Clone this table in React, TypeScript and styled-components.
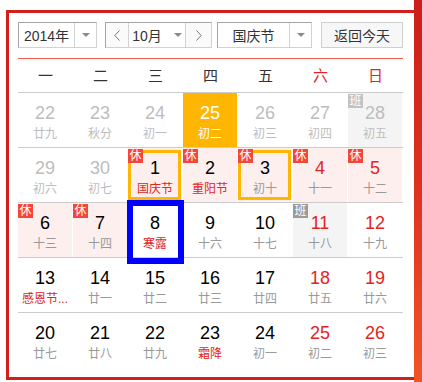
import React from 'react'
import styled, { createGlobalStyle, css } from 'styled-components'

const GlobalStyle = createGlobalStyle`
  html, body {
    margin: 0;
    padding: 0;
    background: #fff;
  }
  body {
    font-family: "Liberation Sans", "Noto Sans CJK SC", sans-serif;
    color: #333;
  }
`

const Page = styled.div`
  display: flex;
  width: 422px;
  height: 382px;
  overflow: hidden;
`

const Frame = styled.div`
  margin: 10px 0 0 6px;
  width: 408px;
  height: 370px;
  box-sizing: border-box;
  border: 3px solid #d21f1b;
  border-right: none;
  padding: 9px 11px 10px 9px;
  background: #fff;
`

const Strip = styled.div`
  width: 8px;
  height: 382px;
  background: linear-gradient(to bottom, #cc1d1a 0%, #de3220 50%, #f25426 100%);
`

const Toolbar = styled.div`
  display: flex;
  height: 26px;
`

const Group = styled.div<{ $w: number; $ml?: number }>`
  display: flex;
  width: ${p => p.$w}px;
  margin-left: ${p => p.$ml ?? 0}px;
  box-sizing: border-box;
  border: 1px solid #d2d2d2;
  border-top-color: #a5a5a5;
  border-left-color: #a5a5a5;
  background: #fff;
`

const SelectText = styled.div<{ $w: number }>`
  width: ${p => p.$w}px;
  display: flex;
  align-items: center;
  justify-content: center;
  font-size: 14px;
  color: #333;
`

const ArrowPart = styled.div`
  flex: 1;
  display: flex;
  align-items: center;
  justify-content: center;
  border-left: 1px solid #d2d2d2;
`

const Caret = styled.span<{ $ml?: number }>`
  display: inline-block;
  width: 0;
  height: 0;
  margin-left: ${p => p.$ml ?? 0}px;
  border-top: 4px solid #8a8a8a;
  border-left: 4px solid transparent;
  border-right: 4px solid transparent;
`

const NavButton = styled.div<{ $w: number; $side: 'left' | 'right' }>`
  width: ${p => p.$w}px;
  display: flex;
  align-items: center;
  justify-content: center;
  background: #fafafa;
  ${p => (p.$side === 'left' ? 'border-right' : 'border-left')}: 1px solid #d2d2d2;
`

const MonthText = styled.div`
  flex: 1;
  display: flex;
  align-items: center;
  justify-content: center;
  font-size: 14px;
  color: #333;
`

const TodayButton = styled.div`
  margin-left: 9px;
  width: 82px;
  box-sizing: border-box;
  border: 1px solid #cfcfcf;
  background: #f7f7f7;
  display: flex;
  align-items: center;
  justify-content: center;
  font-size: 14px;
  color: #333;
`

const RedRule = styled.div`
  margin-top: 10px;
  height: 1px;
  background: #f5594b;
`

const WeekHeader = styled.div`
  display: grid;
  grid-template-columns: repeat(7, 55px);
  height: 33px;
  border-bottom: 1px solid #cccccc;
`

const WeekDay = styled.div<{ $red?: boolean }>`
  text-align: center;
  line-height: 33px;
  font-size: 15px;
  color: ${p => (p.$red ? '#e3241f' : '#333')};
`

const Row = styled.div<{ $last?: boolean }>`
  display: grid;
  grid-template-columns: repeat(7, 54px);
  column-gap: 1px;
  width: 385px;
  height: 54px;
  border-bottom: ${p => (p.$last ? 'none' : '1px solid #cccccc')};
`

type Tone = 'other' | 'normal' | 'weekend' | 'today'
type Bg = 'none' | 'rest' | 'work' | 'today'

const bgColors: Record<Bg, string> = {
  none: 'transparent',
  rest: '#fdefee',
  work: '#f4f4f4',
  today: '#ffb602',
}

const numColors: Record<Tone, string> = {
  other: '#bdbdbd',
  normal: '#000',
  weekend: '#e3241f',
  today: '#fff',
}

const Cell = styled.div<{ $bg: Bg; $mark?: 'yellow' | 'blue' }>`
  position: relative;
  display: flex;
  flex-direction: column;
  align-items: center;
  padding-top: 9px;
  box-sizing: border-box;
  background: ${p => bgColors[p.$bg]};
  ${p =>
    p.$mark === 'yellow' &&
    css`
      &::after {
        content: '';
        position: absolute;
        left: 0;
        right: 1px;
        top: 2px;
        bottom: 2px;
        border: 3px solid #ffb602;
      }
    `}
  ${p =>
    p.$mark === 'blue' &&
    css`
      background: #fff;
      &::after {
        content: '';
        position: absolute;
        left: -1px;
        right: -2px;
        top: -3px;
        bottom: -7px;
        border: 6px solid #0000ff;
        z-index: 2;
      }
    `}
`

const DayNum = styled.div<{ $tone: Tone }>`
  font-size: 18px;
  line-height: 22px;
  color: ${p => numColors[p.$tone]};
`

const Lunar = styled.div<{ $tone: Tone; $fest?: boolean }>`
  font-size: 12px;
  line-height: 20px;
  white-space: nowrap;
  color: ${p =>
    p.$tone === 'today'
      ? '#fff'
      : p.$tone === 'other'
        ? '#bdbdbd'
        : p.$fest
          ? '#e3241f'
          : '#999'};
`

const Badge = styled.span<{ $kind: 'rest' | 'work' | 'workDim' }>`
  position: absolute;
  top: 1px;
  left: 0;
  z-index: 1;
  width: 15px;
  height: 14px;
  font-size: 12px;
  line-height: 14px;
  text-align: center;
  color: #fff;
  background: ${p =>
    p.$kind === 'rest' ? '#f4473a' : p.$kind === 'work' ? '#9a9a9a' : '#c2c2c2'};
`

type Day = {
  d: number
  l: string
  tone: Tone
  bg?: Bg
  fest?: boolean
  badge?: 'rest' | 'work' | 'workDim'
  mark?: 'yellow' | 'blue'
}

const o = (d: number, l: string, extra: Partial<Day> = {}): Day => ({ d, l, tone: 'other', ...extra })
const n = (d: number, l: string, extra: Partial<Day> = {}): Day => ({ d, l, tone: 'normal', ...extra })
const w = (d: number, l: string, extra: Partial<Day> = {}): Day => ({ d, l, tone: 'weekend', ...extra })

const weeks: Day[][] = [
  [
    o(22, '廿九'),
    o(23, '秋分'),
    o(24, '初一'),
    { d: 25, l: '初二', tone: 'today', bg: 'today' },
    o(26, '初三'),
    o(27, '初四'),
    o(28, '初五', { bg: 'work', badge: 'workDim' }),
  ],
  [
    o(29, '初六'),
    o(30, '初七'),
    n(1, '国庆节', { bg: 'rest', badge: 'rest', fest: true, mark: 'yellow' }),
    n(2, '重阳节', { bg: 'rest', badge: 'rest', fest: true }),
    n(3, '初十', { bg: 'rest', badge: 'rest', mark: 'yellow' }),
    w(4, '十一', { bg: 'rest', badge: 'rest' }),
    w(5, '十二', { bg: 'rest', badge: 'rest' }),
  ],
  [
    n(6, '十三', { bg: 'rest', badge: 'rest' }),
    n(7, '十四', { bg: 'rest', badge: 'rest' }),
    n(8, '寒露', { fest: true, mark: 'blue' }),
    n(9, '十六'),
    n(10, '十七'),
    w(11, '十八', { bg: 'work', badge: 'work' }),
    w(12, '十九'),
  ],
  [
    n(13, '感恩节...', { fest: true }),
    n(14, '廿一'),
    n(15, '廿二'),
    n(16, '廿三'),
    n(17, '廿四'),
    w(18, '廿五'),
    w(19, '廿六'),
  ],
  [
    n(20, '廿七'),
    n(21, '廿八'),
    n(22, '廿九'),
    n(23, '霜降', { fest: true }),
    n(24, '初一'),
    w(25, '初二'),
    w(26, '初三'),
  ],
]

const weekNames = ['一', '二', '三', '四', '五', '六', '日']

const Chevron = ({ dir }: { dir: 'left' | 'right' }) => (
  <svg width="6" height="11" viewBox="0 0 6 11">
    <polyline
      points={dir === 'left' ? '5.5,0.5 0.8,5.5 5.5,10.5' : '0.5,0.5 5.2,5.5 0.5,10.5'}
      fill="none"
      stroke="#777"
      strokeWidth="1"
    />
  </svg>
)

export default function App() {
  return (
    <Page>
      <GlobalStyle />
      <Frame>
        <Toolbar>
          <Group $w={79}>
            <SelectText $w={55}>2014年</SelectText>
            <ArrowPart>
              <Caret />
            </ArrowPart>
          </Group>
          <Group $w={107} $ml={8}>
            <NavButton $w={22} $side="left">
              <Chevron dir="left" />
            </NavButton>
            <MonthText>
              10月
              <Caret $ml={12} />
            </MonthText>
            <NavButton $w={25} $side="right">
              <Chevron dir="right" />
            </NavButton>
          </Group>
          <Group $w={95} $ml={5}>
            <SelectText $w={71}>国庆节</SelectText>
            <ArrowPart>
              <Caret />
            </ArrowPart>
          </Group>
          <TodayButton>返回今天</TodayButton>
        </Toolbar>
        <RedRule />
        <WeekHeader>
          {weekNames.map((name, i) => (
            <WeekDay key={name} $red={i >= 5}>
              {name}
            </WeekDay>
          ))}
        </WeekHeader>
        {weeks.map((week, wi) => (
          <Row key={wi} $last={wi === weeks.length - 1}>
            {week.map(day => (
              <Cell key={`${wi}-${day.d}`} $bg={day.bg ?? 'none'} $mark={day.mark}>
                {day.badge && <Badge $kind={day.badge}>{day.badge === 'rest' ? '休' : '班'}</Badge>}
                <DayNum $tone={day.tone}>{day.d}</DayNum>
                <Lunar $tone={day.tone} $fest={day.fest}>
                  {day.l}
                </Lunar>
              </Cell>
            ))}
          </Row>
        ))}
      </Frame>
      <Strip />
    </Page>
  )
}
